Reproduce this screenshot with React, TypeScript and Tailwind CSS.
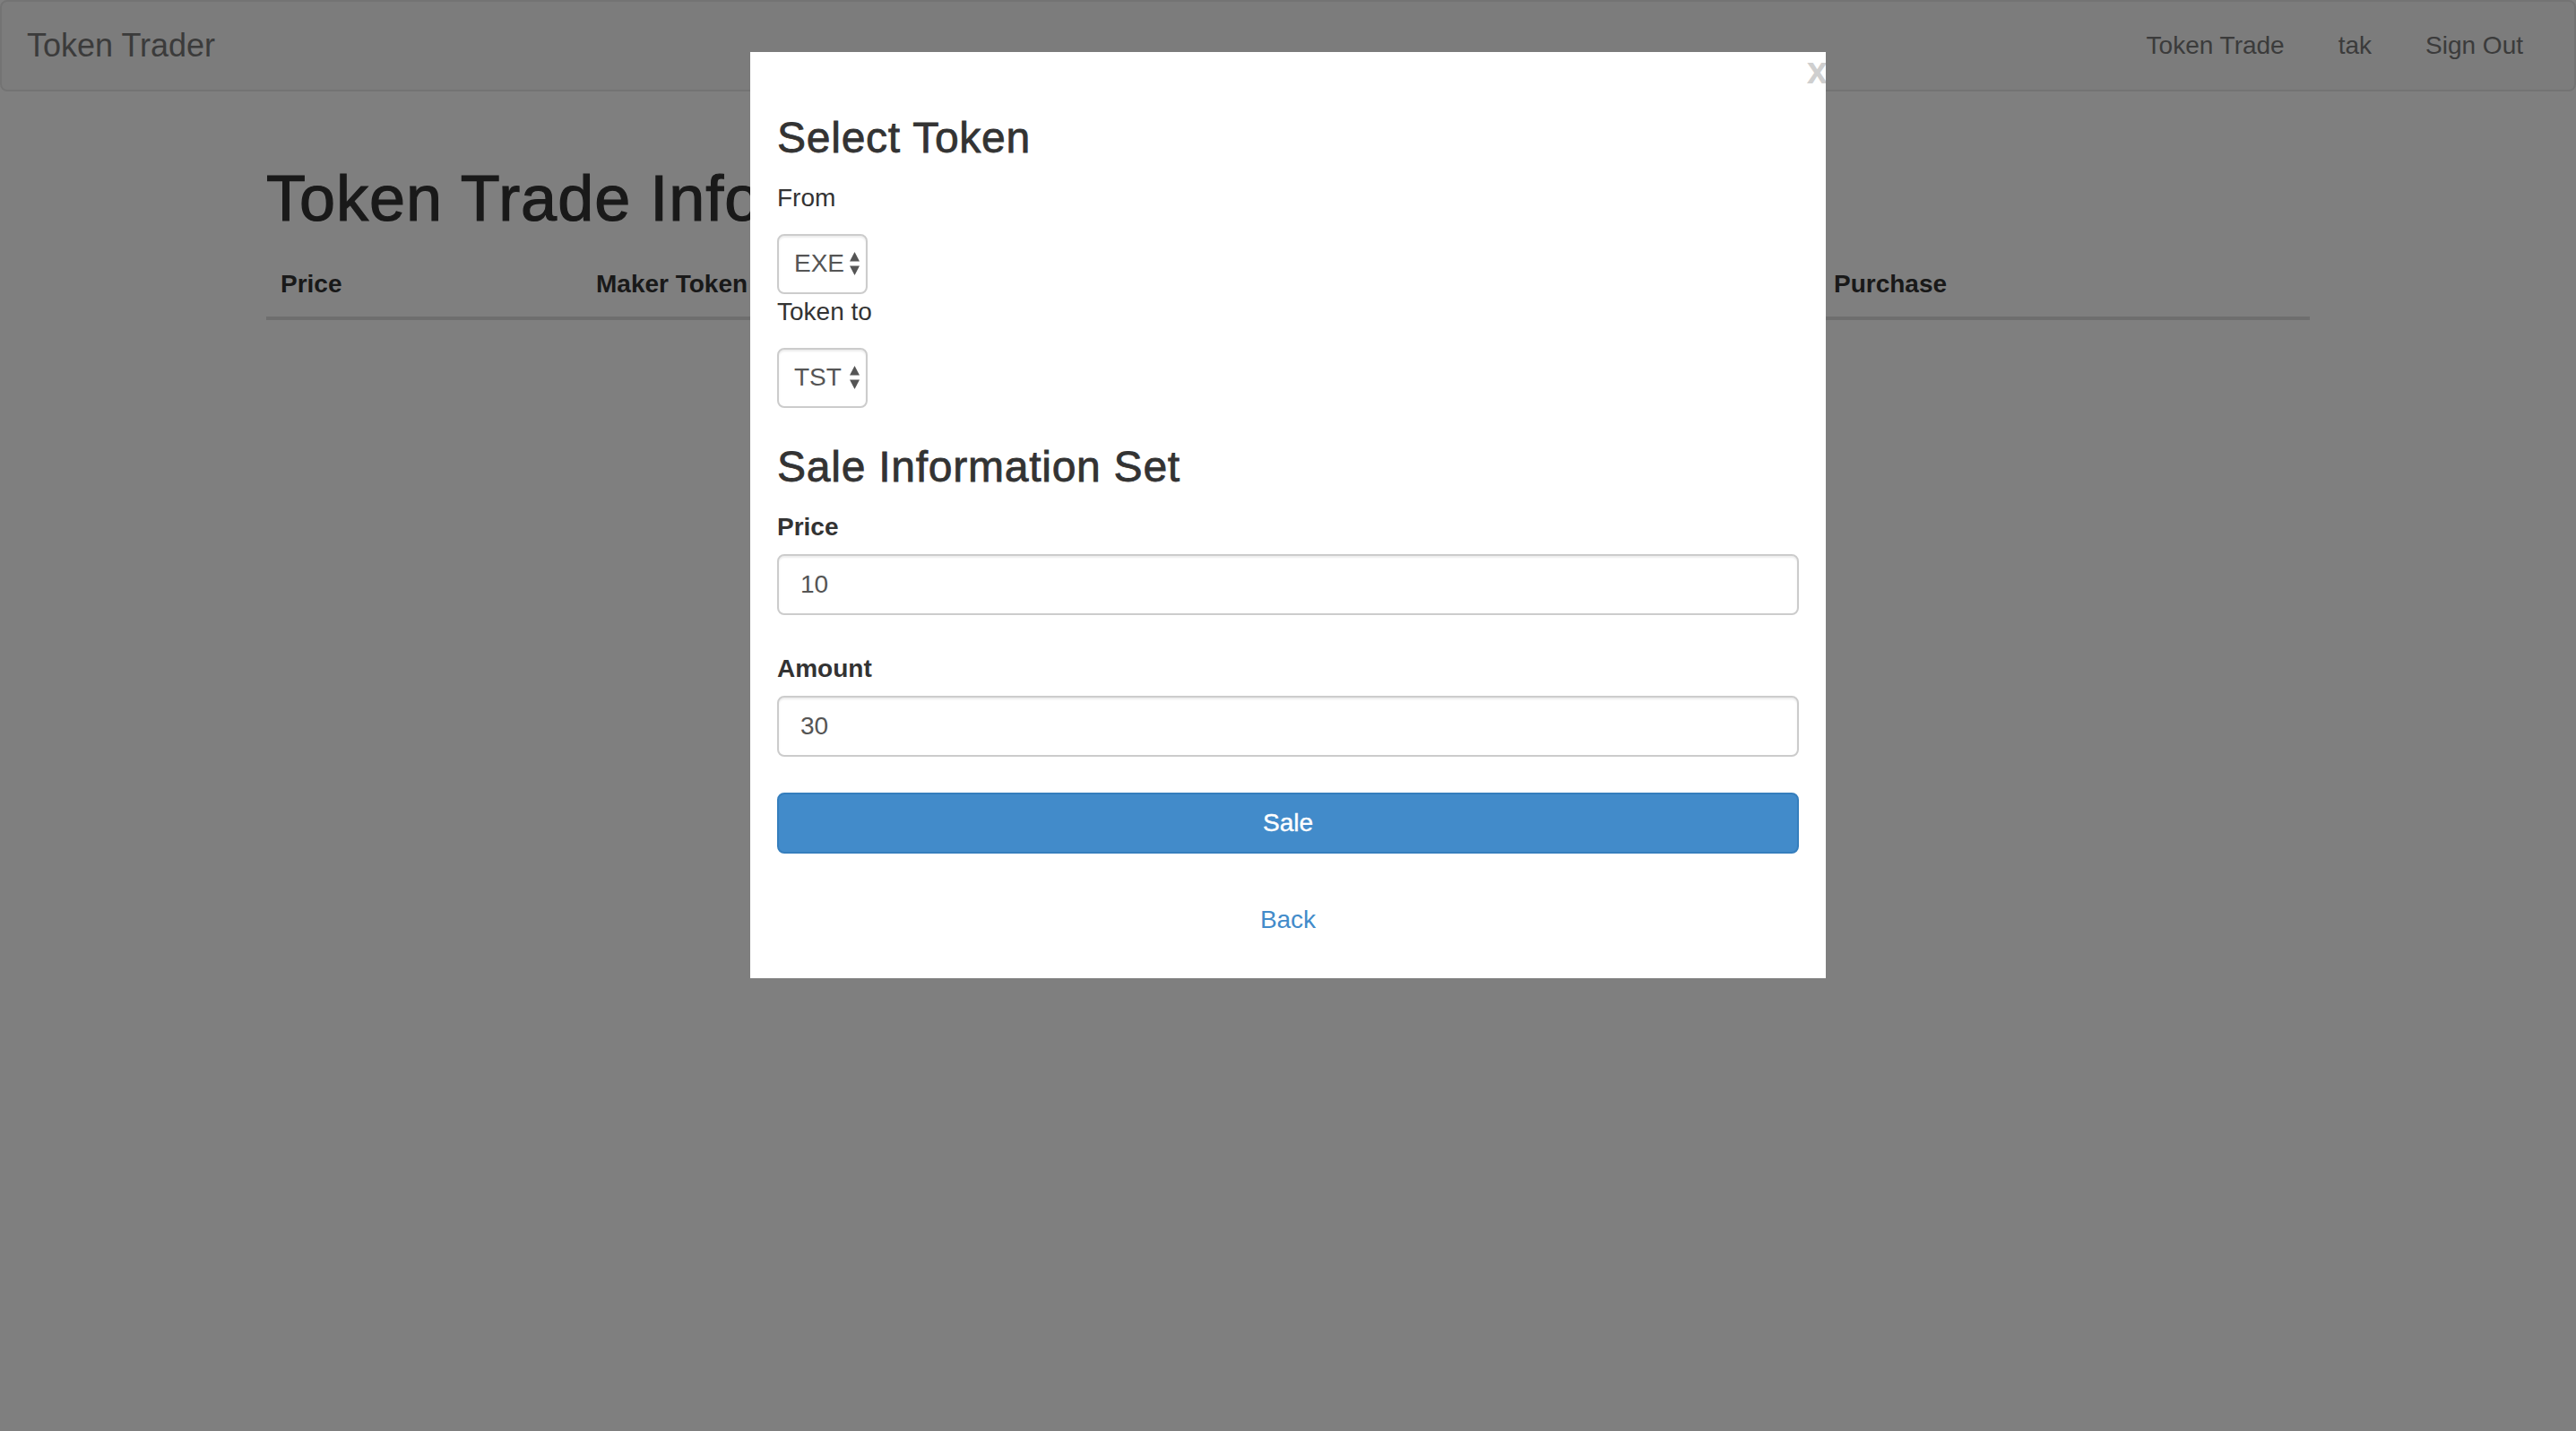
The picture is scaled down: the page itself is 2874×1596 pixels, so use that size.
import React from "react";

function SelectArrows() {
  return (
    <svg
      className="absolute right-[9px] top-1/2 -translate-y-1/2 pointer-events-none"
      width="11"
      height="26"
      viewBox="0 0 11 26"
    >
      <path d="M5.5 0 L11 10.5 L0 10.5 Z" fill="#555" />
      <path d="M0 15.5 L11 15.5 L5.5 26 Z" fill="#555" />
    </svg>
  );
}

function TokenSelect({ value, options }: { value: string; options: string[] }) {
  return (
    <div className="relative w-[101px] h-[67px]">
      <select
        defaultValue={value}
        className="appearance-none w-full h-full bg-white border-2 border-[#ccc] rounded-[8px] pl-[17px] text-[28px] text-[#555] shadow-[inset_0_2px_2px_rgba(0,0,0,0.075)] outline-none"
      >
        {options.map((o) => (
          <option key={o} value={o}>
            {o}
          </option>
        ))}
      </select>
      <SelectArrows />
    </div>
  );
}

function Field({ label, value }: { label: string; value: string }) {
  return (
    <div className="mb-[40px]">
      <label className="block font-bold text-[28px] leading-[40px] mb-[10px]">{label}</label>
      <input
        defaultValue={value}
        className="block w-full h-[68px] bg-white border-2 border-[#ccc] rounded-[8px] px-[24px] text-[28px] text-[#555] shadow-[inset_0_2px_2px_rgba(0,0,0,0.075)] outline-none"
      />
    </div>
  );
}

export default function App() {
  const columns = ["Price", "Maker Token", "Maker Amount", "Taker Token", "Taker Amount", "Purchase"];

  return (
    <div className="relative min-h-screen h-[1596px] bg-white font-['Liberation_Sans',Arial,sans-serif] text-[#333] overflow-hidden">
      {/* Navbar */}
      <nav className="h-[102px] bg-[#f8f8f8] border-2 border-[#e7e7e7] rounded-[8px] flex items-center justify-between pl-[28px] pr-[57px]">
        <span className="text-[36px] text-[#777]">Token Trader</span>
        <ul className="flex items-center">
          <li className="px-[30px] text-[28px] text-[#777]">Token Trade</li>
          <li className="px-[30px] text-[28px] text-[#777]">tak</li>
          <li className="pl-[30px] text-[28px] text-[#777]">Sign Out</li>
        </ul>
      </nav>

      {/* Page content */}
      <div className="mx-auto w-[2340px] px-[30px] pt-[40px]">
        <h1 className="text-[72px] leading-[1.1] font-medium tracking-[1px] [-webkit-text-stroke:1.2px_currentColor] mt-[40px] mb-[20px]">
          Token Trade Info
        </h1>
        <div className="grid grid-cols-[352px_345px_345px_345px_346px_1fr] border-b-4 border-[#ddd]">
          {columns.map((c) => (
            <div key={c} className="px-[16px] py-[16px] text-[28px] leading-[40px] font-bold whitespace-nowrap">
              {c}
            </div>
          ))}
        </div>
      </div>

      {/* Backdrop */}
      <div className="fixed inset-0 bg-black/50" />

      {/* Modal */}
      <div className="fixed top-[58px] left-1/2 -translate-x-1/2 w-[1200px] bg-white overflow-hidden px-[30px] pt-[30px] pb-[45px]">
        <button className="absolute top-0 right-[-2px] text-[42px] leading-none font-bold text-[#cfcfcf]">x</button>

        <h3 className="text-[48px] leading-[1.1] font-medium tracking-[0.75px] [-webkit-text-stroke:0.8px_currentColor] mt-[40px] mb-[20px]">
          Select Token
        </h3>
        <div className="text-[28px] leading-[40px] mb-[20px]">From</div>
        <TokenSelect value="EXE" options={["EXE", "TST"]} />
        <div className="text-[28px] leading-[40px] mb-[20px]">Token to</div>
        <TokenSelect value="TST" options={["TST", "EXE"]} />

        <h3 className="text-[48px] leading-[1.1] font-medium tracking-[0.75px] [-webkit-text-stroke:0.8px_currentColor] mt-[40px] mb-[20px]">
          Sale Information Set
        </h3>
        <Field label="Price" value="10" />
        <Field label="Amount" value="30" />

        <button className="block w-full h-[68px] bg-[#428bca] border-2 border-[#357ebd] rounded-[8px] text-white text-[28px] [-webkit-text-stroke:0.4px_currentColor] mb-[54px]">
          Sale
        </button>
        <div className="text-center text-[28px] leading-[40px] text-[#428bca]">Back</div>
      </div>
    </div>
  );
}
